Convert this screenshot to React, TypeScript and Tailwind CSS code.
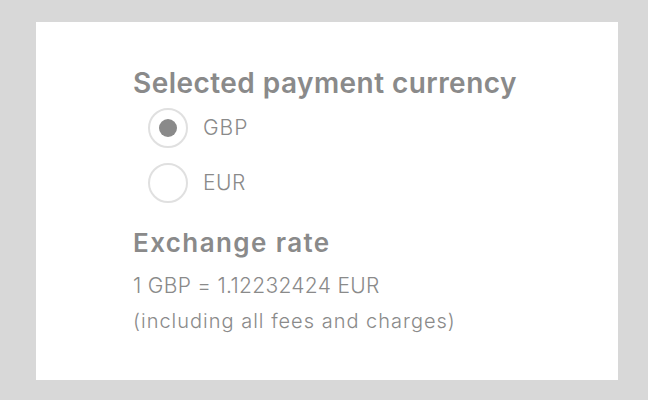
const App = () => {
  return (
    <div className="w-[648px] h-[400px] bg-[#d8d8d8] pt-[22px] pl-[36px] pr-[30px]" style={{ fontFamily: "Inter, sans-serif" }}>
      <div className="bg-white h-[358px] pl-[97px] pt-[43px] text-[#8a8a8a]">
        <h2 className="text-[28px] font-semibold leading-[36px] tracking-[0.45px]">Selected payment currency</h2>
        <div className="flex flex-col gap-[15px] pl-[15px] mt-[7px]">
          <label className="flex items-center gap-[15px]">
            <span className="w-[40px] h-[40px] rounded-full border-2 border-[#e0e0e0] flex items-center justify-center">
              <span className="w-[18px] h-[18px] rounded-full bg-[#8a8a8a]" />
            </span>
            <span className="text-[21px] font-light tracking-[1px]">GBP</span>
          </label>
          <label className="flex items-center gap-[15px]">
            <span className="w-[40px] h-[40px] rounded-full border-2 border-[#e0e0e0]" />
            <span className="text-[21px] font-light tracking-[0.5px]">EUR</span>
          </label>
        </div>
        <h3 className="text-[26px] font-semibold leading-[34px] mt-[23px] tracking-[1.4px]">Exchange rate</h3>
        <p className="text-[21px] font-light leading-[28px] mt-[12px] tracking-[0.3px]">1 GBP = 1.12232424 EUR</p>
        <p className="text-[20px] font-light leading-[28px] mt-[7px] tracking-[1px]">(including all fees and charges)</p>
      </div>
    </div>
  );
};

export default App;
